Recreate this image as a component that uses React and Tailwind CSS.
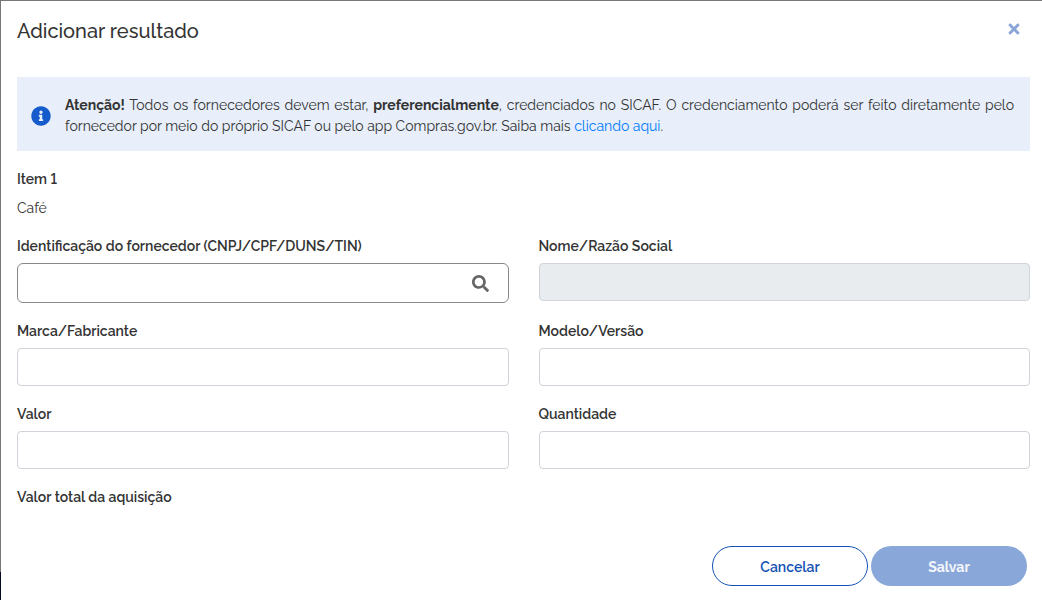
import React from 'react';
import { FaInfoCircle, FaSearch, FaTimes } from 'react-icons/fa';

const inputClass =
  'block h-[38px] w-full rounded border border-[#ced4da] bg-white px-3 outline-none disabled:bg-[#e9ecef]';

function Field({ id, label, children, ...props }) {
  return (
    <div>
      <label htmlFor={id} className="mb-[6px] block font-semibold">
        {label}
      </label>
      {children || <input id={id} type="text" className={inputClass} {...props} />}
    </div>
  );
}

export default function App() {
  return (
    <div className="flex min-h-screen flex-col bg-[linear-gradient(to_top,#050a1e_28px,#777777_28px)] pl-px pt-px font-['Raleway','Lato',sans-serif] text-[14px] lining-nums leading-[21px] text-[#333333]">
      <div
        role="dialog"
        aria-labelledby="dialog-title"
        className="flex-1 bg-white pb-3 pl-4 pr-3 pt-[15px]"
      >
        <header className="mb-[31px] flex items-start justify-between pr-2">
          <h1 id="dialog-title" className="text-[20px] font-medium leading-[30px]">
            Adicionar resultado
          </h1>
          <button type="button" aria-label="Fechar" className="mt-[5px] text-[#8aa6d9]">
            <FaTimes size={16} />
          </button>
        </header>

        <div className="mb-[18px] flex items-center gap-[14px] bg-[#e8effa] pb-[14px] pl-[14px] pr-4 pt-[18px]">
          <FaInfoCircle size={20} className="shrink-0 text-[#155bcb]" />
          <p className="text-justify">
            <strong className="font-bold">Atenção!</strong> Todos os fornecedores devem estar,{' '}
            <strong className="font-bold">preferencialmente</strong>, credenciados no SICAF. O
            credenciamento poderá ser feito diretamente pelo fornecedor por meio do próprio SICAF ou
            pelo app Compras.gov.br. Saiba mais{' '}
            <a href="#" className="text-[#007bff]">
              clicando aqui
            </a>
            .
          </p>
        </div>

        <h2 className="mb-2 font-semibold">Item 1</h2>
        <p className="mb-[17px]">Café</p>

        <form>
          <div className="grid grid-cols-2 gap-x-[30px] gap-y-[18px]">
            <Field id="fornecedor" label="Identificação do fornecedor (CNPJ/CPF/DUNS/TIN)">
              <div className="flex h-10 items-center rounded-md border border-[#888888] pr-[19px]">
                <input
                  id="fornecedor"
                  type="text"
                  className="h-full min-w-0 flex-1 bg-transparent px-3 outline-none"
                />
                <button type="button" aria-label="Pesquisar" className="text-[#666666]">
                  <FaSearch size={17} />
                </button>
              </div>
            </Field>
            <Field id="nome" label="Nome/Razão Social" disabled />
            <Field id="marca" label="Marca/Fabricante" />
            <Field id="modelo" label="Modelo/Versão" />
            <Field id="valor" label="Valor" />
            <Field id="quantidade" label="Quantidade" />
          </div>
          <p className="mb-[38px] mt-[18px] font-semibold">Valor total da aquisição</p>
          <div className="flex justify-end gap-[3px] pr-[3px]">
            <button
              type="button"
              className="h-10 w-[156px] rounded-full border border-[#1351b4] pt-[3px] font-semibold text-[#1351b4]"
            >
              Cancelar
            </button>
            <button
              type="submit"
              disabled
              className="h-10 w-[156px] rounded-full bg-[#8aa7d9] pt-[3px] font-bold text-[#f3f6fc]"
            >
              Salvar
            </button>
          </div>
        </form>
      </div>
    </div>
  );
}
